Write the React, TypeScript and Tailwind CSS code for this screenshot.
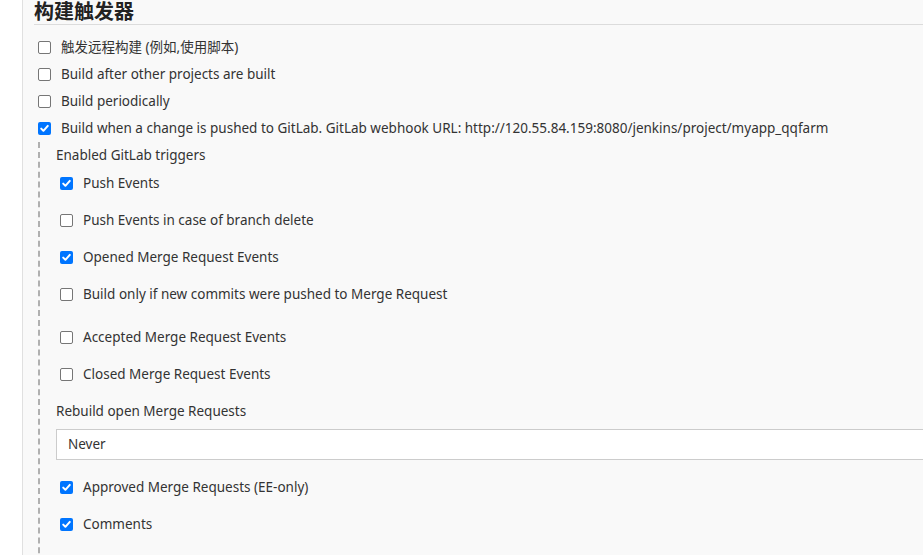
import React from "react";

const font = { fontFamily: '"Noto Sans", "Noto Sans CJK SC", sans-serif' };

function Box({ checked }: { checked?: boolean }) {
  if (checked) {
    return (
      <span className="inline-flex w-[13px] h-[13px] rounded-[2px] bg-[#0075ff] items-center justify-center shrink-0">
        <svg width="11" height="11" viewBox="0 0 11 11">
          <path d="M2.2 5.6 L4.4 7.8 L8.8 2.9" stroke="white" strokeWidth="2" fill="none" strokeLinecap="round" strokeLinejoin="round" />
        </svg>
      </span>
    );
  }
  return <span className="inline-block w-[13px] h-[13px] rounded-[2px] border border-[#767676] bg-white shrink-0" />;
}

export default function App() {
  return (
    <div className="w-[923px] h-[555px] overflow-hidden flex bg-white text-[13.5px] text-[#333]" style={font}>
      <div className="w-[23px] shrink-0 bg-white border-r border-[#e0e0e0]" />
      <div className="flex-1 bg-[#f9f9f9] pl-[11px] min-w-0">
        <div className="border-b border-[#dcdcdc] h-[25px] w-[1000px] pt-[2px]">
          <h2 className="text-[20px] font-bold leading-[20px] text-[#222]">构建触发器</h2>
        </div>
        <div className="pt-[9px] pl-[1px]">
          <div className="flex items-center h-[27px] pl-[3px]">
            <Box />
            <span className="ml-[10px]">触发远程构建 (例如,使用脚本)</span>
          </div>
          <div className="flex items-center h-[27px] pl-[3px]">
            <Box />
            <span className="ml-[10px]">Build after other projects are built</span>
          </div>
          <div className="flex items-center h-[27px] pl-[3px]">
            <Box />
            <span className="ml-[10px]">Build periodically</span>
          </div>
          <div className="flex items-center h-[27px] pl-[3px]">
            <Box checked />
            <span className="ml-[10px] whitespace-nowrap">
              Build when a change is pushed to GitLab. GitLab webhook URL: http://120.55.84.159:8080/jenkins/project/myapp_qqfarm
            </span>
          </div>
          <div className="ml-[3px] border-l-2 border-dashed border-[#b0b0b0] pl-[16px] pb-[40px]">
            <div className="h-[23px] pt-[3px] flex items-center">Enabled GitLab triggers</div>
            <div className="pl-[4px]">
              <div className="h-[37px] flex items-center">
                <Box checked />
                <span className="ml-[10px]">Push Events</span>
              </div>
              <div className="h-[37px] flex items-center">
                <Box />
                <span className="ml-[10px]">Push Events in case of branch delete</span>
              </div>
              <div className="h-[37px] flex items-center">
                <Box checked />
                <span className="ml-[10px]">Opened Merge Request Events</span>
              </div>
              <div className="h-[37px] flex items-center">
                <Box />
                <span className="ml-[10px]">Build only if new commits were pushed to Merge Request</span>
              </div>
              <div className="h-[43px] flex items-end">
                <div className="h-[37px] flex items-center">
                  <Box />
                  <span className="ml-[10px]">Accepted Merge Request Events</span>
                </div>
              </div>
              <div className="h-[37px] flex items-center">
                <Box />
                <span className="ml-[10px]">Closed Merge Request Events</span>
              </div>
            </div>
            <div className="h-[36px] flex items-center">Rebuild open Merge Requests</div>
            <div className="h-[31px] w-[900px] bg-white border border-[#cccccc] flex items-center pl-[11px]">Never</div>
            <div className="pl-[4px] mt-[9px]">
              <div className="h-[37px] flex items-center">
                <Box checked />
                <span className="ml-[10px]">Approved Merge Requests (EE-only)</span>
              </div>
              <div className="h-[37px] flex items-center">
                <Box checked />
                <span className="ml-[10px]">Comments</span>
              </div>
            </div>
          </div>
        </div>
      </div>
    </div>
  );
}
